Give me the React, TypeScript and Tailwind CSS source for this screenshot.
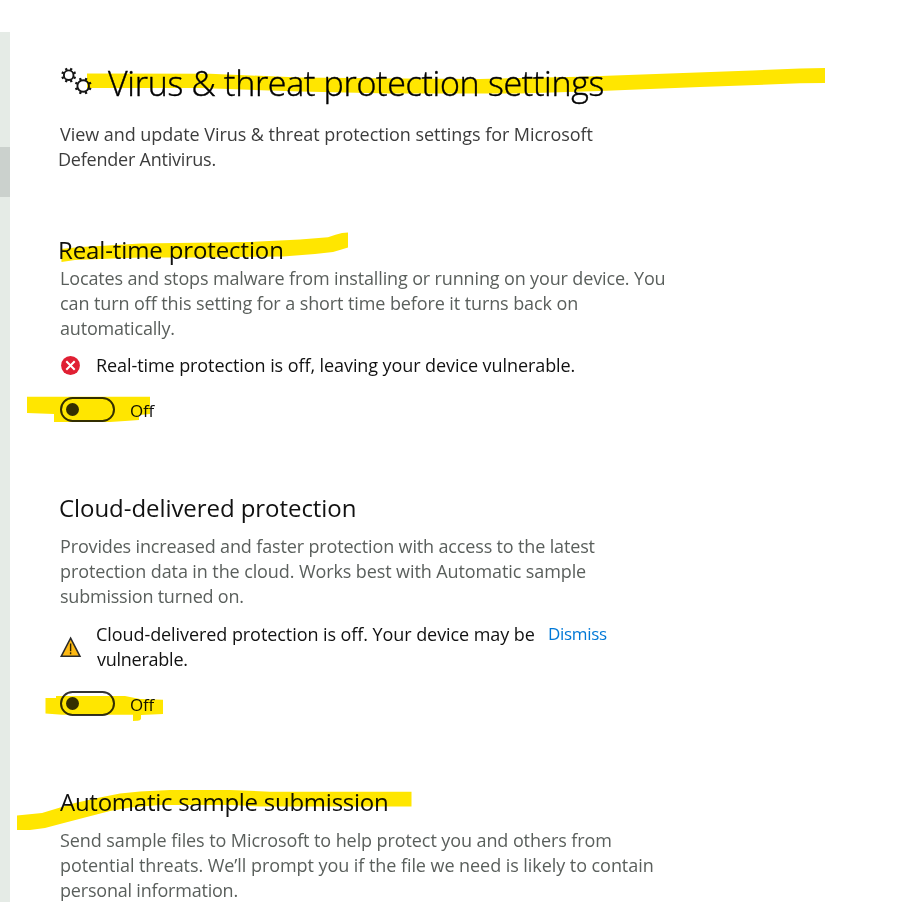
import type { ReactNode } from "react";

function Line({ className, children }: { className: string; children: ReactNode }) {
  return <span className={`block whitespace-nowrap ${className}`}>{children}</span>;
}

function Heading({ className, children }: { className: string; children: ReactNode }) {
  return (
    <h2 className={`whitespace-nowrap text-[24px] leading-[32px] text-[#111111] ${className}`}>
      {children}
    </h2>
  );
}

function Paragraph({ className = "", children }: { className?: string; children: ReactNode }) {
  return <p className={`text-[18px] leading-[25px] text-[#5a5f5c] ${className}`}>{children}</p>;
}

const TEETH = [22.5, 67.5, 112.5, 157.5, 202.5, 247.5, 292.5, 337.5];

function Gear({ cx, cy, r }: { cx: number; cy: number; r: number }) {
  return (
    <g transform={`translate(${cx} ${cy})`} fill="none" stroke="currentColor">
      <circle r={r} strokeWidth="1.9" />
      {TEETH.map((angle) => (
        <path key={angle} d={`M0 ${-r - 0.4}V${-r - 2.7}`} strokeWidth="2.3" transform={`rotate(${angle})`} />
      ))}
    </g>
  );
}

function GearsIcon() {
  return (
    <svg className="mt-[5px] h-[30px] w-[34px] shrink-0 text-[#151515]" viewBox="60 66 34 30">
      <Gear cx={68.7} cy={75.2} r={4.8} />
      <Gear cx={83.2} cy={86} r={5.8} />
    </svg>
  );
}

function ErrorIcon() {
  return (
    <svg className="h-5 w-5 shrink-0" viewBox="0 0 20 20">
      <circle cx="10.5" cy="9.5" r="9.4" fill="#e01f33" />
      <path d="M6.3 5.3l8.4 8.4M14.7 5.3l-8.4 8.4" stroke="#fff" strokeWidth="2" />
    </svg>
  );
}

function WarningIcon() {
  return (
    <svg className="h-[22px] w-[22px] shrink-0" viewBox="0 0 22 22">
      <path d="M10.6 2.2L19.9 20.2H1.3Z" fill="#fdb913" stroke="#2b2b2b" strokeWidth="1.6" />
      <path d="M10.6 7.6v7.6M10.6 16.2v2" stroke="#2b2100" strokeWidth="1.4" />
    </svg>
  );
}

function Toggle({ className }: { className: string }) {
  return (
    <div className={`flex h-[25px] items-center ${className}`}>
      <div className="flex h-[25px] w-[55px] items-center rounded-full border-2 border-[#333333] pl-1">
        <span className="h-[13px] w-[13px] rounded-full bg-[#333333]" />
      </div>
      <span className="ml-[15px] mt-px text-[17px] leading-[25px] tracking-[-0.2px] text-[#111111]">Off</span>
    </div>
  );
}

function Highlighter() {
  return (
    <svg
      className="pointer-events-none absolute left-0 top-0 h-[902px] w-[913px] mix-blend-multiply"
      viewBox="0 0 913 902"
      fill="#ffe600"
    >
      <path d="M87 73.5L210 73.8L300 77.5L400 78.5L480 79L580 76.7L752 70.5L800 68.5L825 68V83L800 83.3L700 87L600 91L520 93.5H390L300 91.5L200 88H87Z" />
      <path d="M61 249L80 247L100 246L140 243.5L250 242L300 239.5L328 237.3Q336 234.5 342 233L348 232.5V247.5Q340 250 333 252L315 254L283 256.5L200 257.5H140L100 259L75 260L61.5 262Z" />
      <path d="M27 396.7H150V414L139 415V420L125 421L110 422H54V414L27 413Z" />
      <path d="M45.5 698H56V696H125L140 699L163 699.8V714L141 715V719Q140 721 137 720.7L133 721V714.7H62L45.5 713.5Z" />
      <path d="M17 815.5L42 813L75 803L100 797.5L120 793.5L140 791.5L170 790H230L270 791.7H411.5V806.5H260L230 805H160L130 807.5L110 811L83 818L60 824L45 828L30 830H17Z" />
    </svg>
  );
}

export default function App() {
  return (
    <div className="relative flex h-[902px] w-[913px] overflow-hidden bg-white font-['Open_Sans','Noto_Sans',sans-serif]">
      <aside className="mt-8 w-[10px] shrink-0 bg-[#e5ebe6] pt-[115px]">
        <div className="h-[50px] bg-[#cbd1cd]" />
      </aside>

      <main className="pl-[50px] pt-[61px]">
        <header className="flex h-[45px]">
          <GearsIcon />
          <h1 className="ml-[14px] whitespace-nowrap text-[34px] font-light leading-[45px] tracking-[-0.29px] text-black [-webkit-text-stroke:0.4px_black]">
            Virus &amp; threat protection settings
          </h1>
        </header>
        <p className="mt-4 text-[18px] leading-[25px] text-[#3c3c3c]">
          <Line className="tracking-[-0.05px]">View and update Virus &amp; threat protection settings for Microsoft</Line>
          <Line className="-ml-[2px] tracking-[-0.22px]">Defender Antivirus.</Line>
        </p>

        <section className="mt-[62px]">
          <Heading className="-ml-[2px] tracking-[-0.12px]">Real-time protection</Heading>
          <Paragraph>
            <Line className="tracking-[-0.14px]">
              Locates and stops malware from installing or running on your device. You
            </Line>
            <Line className="tracking-[-0.1px]">can turn off this setting for a short time before it turns back on</Line>
            <Line className="tracking-[-0.18px]">automatically.</Line>
          </Paragraph>
          <div className="mt-3 flex h-[25px] items-center text-[18px] leading-[25px] text-[#111111]">
            <ErrorIcon />
            <Line className="ml-[16px] tracking-[-0.08px]">Real-time protection is off, leaving your device vulnerable.</Line>
          </div>
          <Toggle className="mt-[19px]" />
        </section>

        <section className="mt-[70px]">
          <Heading className="-ml-px tracking-[-0.06px]">Cloud-delivered protection</Heading>
          <Paragraph className="mt-[10px]">
            <Line className="tracking-[-0.15px]">Provides increased and faster protection with access to the latest</Line>
            <Line className="tracking-[-0.1px]">protection data in the cloud. Works best with Automatic sample</Line>
            <Line className="tracking-[-0.22px]">submission turned on.</Line>
          </Paragraph>
          <div className="mt-[13px] flex h-[50px] text-[18px] leading-[25px] text-[#111111]">
            <div className="mt-[14px]">
              <WarningIcon />
            </div>
            <p className="ml-[14px] w-[440px]">
              <Line className="tracking-[-0.07px]">Cloud-delivered protection is off. Your device may be</Line>
              <Line className="ml-px tracking-[-0.25px]">vulnerable.</Line>
            </p>
            <a className="ml-[12px] -mt-px text-[17px] tracking-[-0.3px] text-[#0078d7]">Dismiss</a>
          </div>
          <Toggle className="mt-[19px]" />
        </section>

        <section className="mt-[70px]">
          <Heading className="tracking-[-0.26px]">Automatic sample submission</Heading>
          <Paragraph className="mt-[10px]">
            <Line className="tracking-[-0.09px]">Send sample files to Microsoft to help protect you and others from</Line>
            <Line className="tracking-[-0.06px]">
              potential threats. We’ll prompt you if the file we need is likely to contain
            </Line>
            <Line className="tracking-[-0.2px]">personal information.</Line>
          </Paragraph>
        </section>
      </main>

      <Highlighter />
    </div>
  );
}
